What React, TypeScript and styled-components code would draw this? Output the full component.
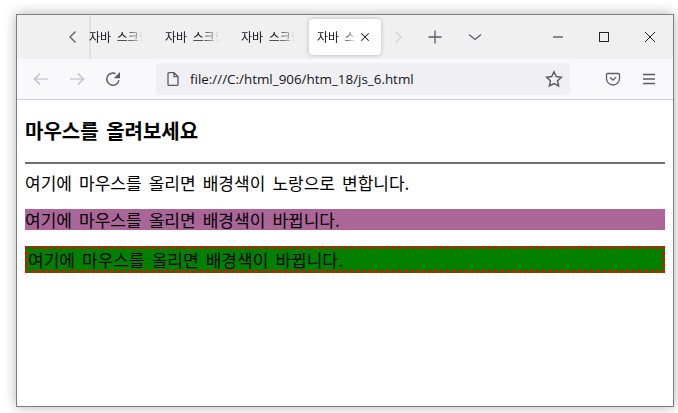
import React from "react";
import styled, { createGlobalStyle } from "styled-components";

const Global = createGlobalStyle`
  html, body { margin: 0; padding: 0; background: #fff; overflow: hidden; }
  * { box-sizing: border-box; }
`;
const Stage = styled.div`
  width: 678px;
  height: 413px;
  padding: 14px 4px 6px 16px;
`;
const Win = styled.div`
  width: 658px;
  height: 393px;
  display: flex;
  flex-direction: column;
  border: 1px solid #7d7d7d;
  background: #fff;
  box-shadow: 0 0 12px rgba(0, 0, 0, 0.3);
`;
const TabBar = styled.div`
  height: 44px;
  background: #f0f0f0;
  display: flex;
  align-items: center;
  padding-left: 48px;
  flex: none;
`;
const ScrollSlot = styled.div<{ $w: number }>`
  width: ${(p) => p.$w}px;
  height: 36px;
  display: flex;
  align-items: center;
  justify-content: center;
  flex: none;
`;
const Tabs = styled.div`
  position: relative;
  display: flex;
  align-items: center;
  gap: 4px;
  height: 44px;
  flex: none;
  &::before {
    content: "";
    position: absolute;
    left: 8px;
    top: 0;
    bottom: 0;
    width: 2px;
    background: #e2e2e2;
  }
`;
const Tab = styled.div<{ $active?: boolean }>`
  width: 72px;
  height: 36px;
  padding-left: 8px;
  border-radius: 4px;
  display: flex;
  align-items: center;
  flex: none;
  background: ${(p) => (p.$active ? "#fff" : "transparent")};
  box-shadow: ${(p) => (p.$active ? "0 0 4px rgba(0,0,0,.25)" : "none")};
`;
const TabText = styled.span<{ $w: number }>`
  width: ${(p) => p.$w}px;
  overflow: hidden;
  white-space: nowrap;
  font: 12px/16px "Noto Sans CJK KR", sans-serif;
  word-spacing: 3px;
  color: #15141a;
  -webkit-mask-image: linear-gradient(to right, #000 70%, transparent 96%);
  mask-image: linear-gradient(to right, #000 70%, transparent 96%);
`;
const TabClose = styled.span`
  display: flex;
  margin-left: 2px;
`;
const Controls = styled.div`
  display: flex;
  align-items: center;
  margin-left: auto;
  height: 44px;
`;
const Control = styled.div`
  width: 46px;
  height: 44px;
  display: flex;
  align-items: center;
  justify-content: center;
`;
const ToolBar = styled.div`
  height: 41px;
  background: #f9f9fb;
  border-bottom: 1px solid #cfcfd8;
  display: flex;
  align-items: center;
  padding-bottom: 1px;
  flex: none;
`;
const ToolBtn = styled.div`
  width: 36px;
  height: 32px;
  display: flex;
  align-items: center;
  justify-content: center;
  flex: none;
`;
const NavGroup = styled.div`
  display: flex;
  padding-left: 6px;
  width: 139px;
  flex: none;
`;
const UrlBar = styled.div`
  width: 414px;
  height: 32px;
  background: #f0f0f4;
  border-radius: 4px;
  display: flex;
  align-items: center;
  padding: 0 7px 0 9px;
  flex: none;
`;
const UrlText = styled.span`
  margin-left: 9px;
  font: 13.42px/18px "Open Sans", "Noto Sans", sans-serif;
  color: #15141a;
  flex: 1;
`;
const RightGroup = styled.div`
  display: flex;
  margin-left: 25px;
`;
const Page = styled.div`
  flex: 1;
  padding: 8px;
  color: #000;
  font-family: "Noto Sans CJK KR", sans-serif;
`;
const Heading = styled.h3`
  margin: 9.7px 0 19.72px;
  font-size: 20px;
  word-spacing: 3px;
  line-height: 25px;
  font-weight: 700;
`;
const Rule = styled.hr`
  margin: 0 0 8px;
  height: 2px;
  border: 0;
  background: #6e6e6e;
`;
const Para = styled.p`
  margin: 0 0 16px;
  font-size: 17px;
  word-spacing: 3.3px;
  line-height: 21px;
  white-space: nowrap;
`;
const Purple = styled(Para)`
  background: #aa6699;
`;
const Green = styled(Para)`
  background: green;
  border: 3px dotted red;
`;

const Ic = ({ d, color = "#5b5b66", w = 16, sw = 1.3 }: { d: string; color?: string; w?: number; sw?: number }) => (
  <svg width={w} height={w} viewBox="0 0 16 16" fill="none" stroke={color} strokeWidth={sw}>
    <path d={d} />
  </svg>
);

const TITLE = "자바 스크립트";

export default function App() {
  return (
    <Stage>
      <Global />
      <Win>
        <TabBar>
          <ScrollSlot $w={16}>
            <Ic d="M10.5 2.5 5 8l5.5 5.5" />
          </ScrollSlot>
          <Tabs>
            <Tab><TabText $w={56}>{TITLE}</TabText></Tab>
            <Tab><TabText $w={56}>{TITLE}</TabText></Tab>
            <Tab><TabText $w={56}>{TITLE}</TabText></Tab>
            <Tab $active>
              <TabText $w={40}>{TITLE}</TabText>
              <TabClose>
                <Ic w={12} color="#15141a" sw={1.4} d="M3 3l10 10M13 3 3 13" />
              </TabClose>
            </Tab>
          </Tabs>
          <ScrollSlot $w={34}>
            <Ic color="#d4d4d8" d="M5.5 2.5 11 8l-5.5 5.5" />
          </ScrollSlot>
          <ScrollSlot $w={40}>
            <Ic d="M8 1.5v13M1.5 8h13" />
          </ScrollSlot>
          <ScrollSlot $w={40}>
            <Ic d="M2 5.5 8 10.5l6-5" />
          </ScrollSlot>
          <Controls>
            <Control>
              <svg width="12" height="12" viewBox="0 0 12 12" fill="none" stroke="#222" strokeWidth="1">
                <path d="M1 6h10" />
              </svg>
            </Control>
            <Control>
              <svg width="12" height="12" viewBox="0 0 12 12" fill="none" stroke="#222" strokeWidth="1">
                <rect x="1.5" y="1.5" width="9" height="9" />
              </svg>
            </Control>
            <Control>
              <svg width="12" height="12" viewBox="0 0 12 12" fill="none" stroke="#222" strokeWidth="1">
                <path d="M1 1l10 10M11 1 1 11" />
              </svg>
            </Control>
          </Controls>
        </TabBar>
        <ToolBar>
          <NavGroup>
            <ToolBtn><Ic color="#b9b9bf" sw={1.1} d="M15 8H1.5M7 2.5 1.5 8 7 13.5" /></ToolBtn>
            <ToolBtn><Ic color="#b9b9bf" sw={1.1} d="M1 8h13.5M9 2.5 14.5 8 9 13.5" /></ToolBtn>
            <ToolBtn>
              <svg width="16" height="16" viewBox="0 0 16 16" fill="none" stroke="#5b5b66" strokeWidth="1.4">
                <path d="M13.9 9.2A6.1 6.1 0 1 1 10.6 2.7" />
                <path d="M15 1v6.2H8.8z" fill="#5b5b66" stroke="none" />
              </svg>
            </ToolBtn>
          </NavGroup>
          <UrlBar>
            <Ic d="M3 2.6c0-.6.5-1 1-1h5l4 4v7.8c0 .6-.5 1-1 1H4c-.5 0-1-.4-1-1zM9 1.6v4h4" />
            <UrlText>file:///C:/html_906/htm_18/js_6.html</UrlText>
            <Ic d="M8 1.5 10 5.8l4.6.6-3.4 3.2.9 4.6L8 12l-4.1 2.2.9-4.6L1.4 6.4 6 5.8z" w={18} />
          </UrlBar>
          <RightGroup>
            <ToolBtn><Ic d="M2.6 2.5h10.8c.7 0 1.1.5 1.1 1.1v3.9a6.5 6.5 0 0 1-13 0V3.6c0-.6.4-1.1 1.1-1.1zM5 6.3l3 2.9 3-2.9" /></ToolBtn>
            <ToolBtn><Ic d="M2 3.5h12M2 8h12M2 12.5h12" /></ToolBtn>
          </RightGroup>
        </ToolBar>
        <Page>
          <Heading>마우스를 올려보세요</Heading>
          <Rule />
          <Para>여기에 마우스를 올리면 배경색이 노랑으로 변합니다.</Para>
          <Purple>여기에 마우스를 올리면 배경색이 바뀝니다.</Purple>
          <Green>여기에 마우스를 올리면 배경색이 바뀝니다.</Green>
        </Page>
      </Win>
    </Stage>
  );
}
